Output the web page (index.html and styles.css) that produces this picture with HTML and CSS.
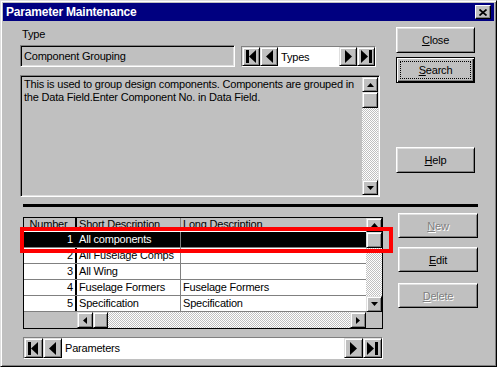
FILE: index.html
```html
<!DOCTYPE html>
<html lang="en">
<head>
    <meta charset="UTF-8">
    <title>Parameter Maintenance</title>
    <link rel="stylesheet" href="styles.css">
</head>
<body>
    <div class="window">
        <div class="titlebar">
            <span class="title">Parameter Maintenance</span>
            <button class="tb-close">
                <svg width="8" height="7" viewBox="0 0 8 7"><path d="M0.5 0.5 L7.5 6.5 M7.5 0.5 L0.5 6.5" stroke="#000" stroke-width="1.7"/></svg>
            </button>
        </div>

        <div class="upper">
            <div class="upper-left">
                <div class="label">Type</div>
                <div class="field-row">
                    <div class="field">Component Grouping</div>
                    <div class="nav nav-small">
                        <button class="nav-btn"><svg width="11" height="13" viewBox="0 0 11 13"><rect x="0" y="0" width="3" height="13"/><polygon points="10,0 3,6.5 10,13"/></svg></button>
                        <button class="nav-btn"><svg width="7" height="13" viewBox="0 0 7 13"><polygon points="7,0 0,6.5 7,13"/></svg></button>
                        <div class="nav-text">Types</div>
                        <button class="nav-btn"><svg width="7" height="13" viewBox="0 0 7 13"><polygon points="0,0 7,6.5 0,13"/></svg></button>
                        <button class="nav-btn"><svg width="11" height="13" viewBox="0 0 11 13"><polygon points="0,0 7,6.5 0,13"/><rect x="8" y="0" width="3" height="13"/></svg></button>
                    </div>
                </div>
                <div class="memo">
                    <div class="memo-text">This is used to group design components. Components are grouped in the Data Field.Enter Component No. in Data Field.</div>
                    <div class="vscroll memo-scroll">
                        <div class="sb-btn"><svg width="7" height="4" viewBox="0 0 7 4"><polygon points="3.5,0 7,4 0,4"/></svg></div>
                        <div class="sb-thumb"></div>
                        <div class="sb-track"></div>
                        <div class="sb-btn"><svg width="7" height="4" viewBox="0 0 7 4"><polygon points="0,0 7,0 3.5,4"/></svg></div>
                    </div>
                </div>
            </div>
            <div class="upper-right">
                <button class="btn"><u>C</u>lose</button>
                <button class="btn btn-default"><span class="focus"><u>S</u>earch</span></button>
                <button class="btn btn-help"><u>H</u>elp</button>
            </div>
        </div>

        <div class="separator"></div>

        <div class="lower">
            <div class="lower-left">
                <div class="grid">
                    <div class="grid-main">
                        <div class="grid-cells">
                            <div class="row head">
                                <div class="cell num">Number</div>
                                <div class="fixsep"></div>
                                <div class="cell short">Short Description</div>
                                <div class="cell long">Long Description</div>
                            </div>
                            <div class="row selected">
                                <div class="cell num">1</div>
                                <div class="fixsep"></div>
                                <div class="cell short">All components</div>
                                <div class="cell long"></div>
                            </div>
                            <div class="row">
                                <div class="cell num">2</div>
                                <div class="fixsep"></div>
                                <div class="cell short">All Fuselage Comps</div>
                                <div class="cell long"></div>
                            </div>
                            <div class="row">
                                <div class="cell num">3</div>
                                <div class="fixsep"></div>
                                <div class="cell short">All Wing</div>
                                <div class="cell long"></div>
                            </div>
                            <div class="row">
                                <div class="cell num">4</div>
                                <div class="fixsep"></div>
                                <div class="cell short">Fuselage Formers</div>
                                <div class="cell long">Fuselage Formers</div>
                            </div>
                            <div class="row">
                                <div class="cell num">5</div>
                                <div class="fixsep"></div>
                                <div class="cell short">Specification</div>
                                <div class="cell long">Specification</div>
                            </div>
                        </div>
                        <div class="vscroll grid-scroll">
                            <div class="sb-btn head-btn"><svg width="7" height="4" viewBox="0 0 7 4"><polygon points="3.5,0 7,4 0,4"/></svg></div>
                            <div class="sb-thumb"></div>
                            <div class="sb-track"></div>
                            <div class="sb-btn"><svg width="7" height="4" viewBox="0 0 7 4"><polygon points="0,0 7,0 3.5,4"/></svg></div>
                        </div>
                    </div>
                    <div class="hscroll-row">
                        <div class="hs-fixed"></div>
                        <div class="hscroll">
                            <div class="sb-btn"><svg width="4" height="7" viewBox="0 0 4 7"><polygon points="4,0 4,7 0,3.5"/></svg></div>
                            <div class="sb-thumb"></div>
                            <div class="sb-track"></div>
                            <div class="sb-btn"><svg width="4" height="7" viewBox="0 0 4 7"><polygon points="0,0 4,3.5 0,7"/></svg></div>
                        </div>
                        <div class="hs-corner"></div>
                    </div>
                </div>
                <div class="nav nav-wide">
                    <button class="nav-btn"><svg width="11" height="13" viewBox="0 0 11 13"><rect x="0" y="0" width="3" height="13"/><polygon points="10,0 3,6.5 10,13"/></svg></button>
                    <button class="nav-btn"><svg width="7" height="13" viewBox="0 0 7 13"><polygon points="7,0 0,6.5 7,13"/></svg></button>
                    <div class="nav-text">Parameters</div>
                    <button class="nav-btn"><svg width="7" height="13" viewBox="0 0 7 13"><polygon points="0,0 7,6.5 0,13"/></svg></button>
                    <button class="nav-btn"><svg width="11" height="13" viewBox="0 0 11 13"><polygon points="0,0 7,6.5 0,13"/><rect x="8" y="0" width="3" height="13"/></svg></button>
                </div>
            </div>
            <div class="lower-right">
                <button class="btn btn-small disabled"><u>N</u>ew</button>
                <button class="btn btn-small btn-edit"><u>E</u>dit</button>
                <button class="btn btn-small btn-delete disabled"><u>D</u>elete</button>
            </div>
        </div>

        <div class="highlight"></div>
    </div>
</body>
</html>
```

FILE: styles.css
```css
* {
    box-sizing: border-box;
}
body {
    margin: 0;
    background-color: #c0c0c0;
    font-family: "Liberation Sans", Arial, sans-serif;
    font-size: 11px;
    letter-spacing: -0.2px;
    color: #000;
}
button {
    font-family: inherit;
    font-size: inherit;
    letter-spacing: inherit;
    color: inherit;
    margin: 0;
    padding: 0;
}
svg {
    display: block;
    fill: #000;
}

/* window frame */
.window {
    position: relative;
    width: 497px;
    height: 367px;
    background-color: #c0c0c0;
    border: 1px solid;
    border-color: #dfdfdf #000 #000 #dfdfdf;
    box-shadow: inset 1px 1px #fff, inset -1px -1px #808080;
    padding: 2px;
}
.titlebar {
    display: flex;
    align-items: center;
    justify-content: space-between;
    height: 18px;
    padding: 0 3px;
    background-color: #000080;
}
.title {
    color: #fff;
    font-weight: bold;
    font-size: 12px;
    letter-spacing: -0.2px;
}
.tb-close {
    display: flex;
    align-items: center;
    justify-content: center;
    width: 16px;
    height: 14px;
    background-color: #c0c0c0;
    border: 1px solid;
    border-color: #fff #000 #000 #fff;
    box-shadow: inset -1px -1px #808080;
}

/* bevels */
.nav-btn,
.sb-btn,
.sb-thumb {
    background-color: #c0c0c0;
    border: 1px solid;
    border-color: #dfdfdf #000 #000 #dfdfdf;
    box-shadow: inset 1px 1px #fff, inset -1px -1px #808080;
}

/* upper part */
.upper {
    display: flex;
    margin: 6px 0 0 17px;
}
.upper-left {
    width: 360px;
}
.upper-right {
    display: flex;
    flex-direction: column;
    margin-left: 16px;
}
.label {
    height: 13px;
    line-height: 13px;
    margin: 1px 0 4px 2px;
}
.field-row {
    display: flex;
    height: 22px;
}
.field {
    width: 215px;
    height: 22px;
    line-height: 18px;
    border: 1px solid;
    border-color: #808080 #fff #fff #808080;
    box-shadow: inset 1px 1px #000, inset -1px -1px #dfdfdf;
    padding: 1px 0 0 3px;
}

/* navigator */
.nav {
    display: flex;
    border: 1px solid;
    border-color: #808080 #fff #fff #808080;
}
.nav-small {
    width: 135px;
    height: 21px;
    margin: 1px 0 0 6px;
}
.nav-wide {
    width: 360px;
    height: 22px;
    margin-top: 8px;
}
.nav-btn {
    display: flex;
    align-items: center;
    justify-content: center;
    width: 18px;
    height: 100%;
}
.nav-wide .nav-btn {
    width: 19px;
}
.nav-text {
    flex: 1;
    background-color: #fff;
    padding-left: 3px;
    display: flex;
    align-items: center;
}

/* memo */
.memo {
    display: flex;
    width: 360px;
    height: 122px;
    margin-top: 8px;
    border: 1px solid;
    border-color: #808080 #fff #fff #808080;
    box-shadow: inset 1px 1px #000, inset -1px -1px #dfdfdf;
    padding: 1px;
}
.memo-text {
    flex: 1;
    padding: 1px 4px 0 2px;
    line-height: 13px;
}

/* scrollbars */
.vscroll {
    display: flex;
    flex-direction: column;
    width: 16px;
}
.sb-btn {
    display: flex;
    align-items: center;
    justify-content: center;
    height: 16px;
    flex: none;
}
.memo-scroll .sb-btn {
    height: 15px;
}
.sb-thumb {
    height: 16px;
    flex: none;
}
.sb-track {
    flex: 1;
    background-image: conic-gradient(#fff 25%, #c0c0c0 0 50%, #fff 0 75%, #c0c0c0 0);
    background-size: 2px 2px;
}

/* buttons */
.btn {
    display: flex;
    align-items: center;
    justify-content: center;
    width: 79px;
    height: 26px;
    background-color: #c0c0c0;
    border: 1px solid;
    border-color: #fff #000 #000 #fff;
    box-shadow: inset 1px 1px #dfdfdf, inset -1px -1px #808080;
    font-size: 11px;
}
.btn-default {
    margin-top: 4px;
    padding: 3px;
    border-color: #000;
    box-shadow: inset 1px 1px #fff, inset -1px -1px #000, inset -2px -2px #808080;
}
.focus {
    display: flex;
    align-items: center;
    justify-content: center;
    width: 100%;
    height: 100%;
    border: 1px dotted #000;
}
.btn-help {
    margin-top: 64px;
}
.btn-small {
    width: 80px;
    height: 25px;
}
.btn-edit {
    margin-top: 9px;
}
.btn-delete {
    margin-top: 11px;
}
.disabled {
    color: #808080;
    text-shadow: 1px 1px #fff;
}

.separator {
    width: 455px;
    height: 3px;
    margin: 7px 0 0 20px;
    background-color: #000;
}

/* lower part */
.lower {
    display: flex;
    margin-left: 20px;
}
.lower-left {
    padding-top: 10px;
}
.lower-right {
    display: flex;
    flex-direction: column;
    padding-top: 6px;
    margin-left: 15px;
}

/* data grid */
.grid {
    width: 360px;
    height: 112px;
    border: 1px solid #000;
    background-color: #c0c0c0;
}
.grid-main {
    display: flex;
    height: 94px;
}
.grid-cells {
    flex: 1;
}
.grid-scroll .head-btn {
    height: 14px;
}
.row {
    display: grid;
    grid-template-columns: 51px 2px 104px 1fr;
    height: 16px;
    background-color: #fff;
    border-bottom: 1px solid #808080;
    line-height: 15px;
}
.row.head {
    height: 14px;
    background-color: #c0c0c0;
    line-height: 11px;
    overflow: hidden;
    border-bottom-color: #fff;
}
.row.selected {
    background-color: #000;
    color: #fff;
}
.cell {
    white-space: nowrap;
    overflow: hidden;
    padding-left: 2px;
}
.cell.num {
    text-align: right;
    padding: 0 2px 0 0;
}
.head .cell.num {
    text-align: center;
}
.cell.short {
    border-right: 1px solid #808080;
}
.head .cell {
    padding-top: 1px;
}
.fixsep {
    background-color: #000;
}
.hscroll-row {
    display: flex;
    height: 16px;
}
.hs-fixed {
    width: 53px;
}
.hscroll {
    flex: 1;
    display: flex;
}
.hscroll .sb-btn {
    width: 16px;
    height: 16px;
}
.hscroll .sb-thumb {
    width: 15px;
    height: 16px;
}
.hs-corner {
    width: 16px;
}

/* red marker drawn over the selected row */
.highlight {
    position: absolute;
    left: 19px;
    top: 226px;
    width: 373px;
    height: 26px;
    border: 4px solid #ff0000;
}
```
